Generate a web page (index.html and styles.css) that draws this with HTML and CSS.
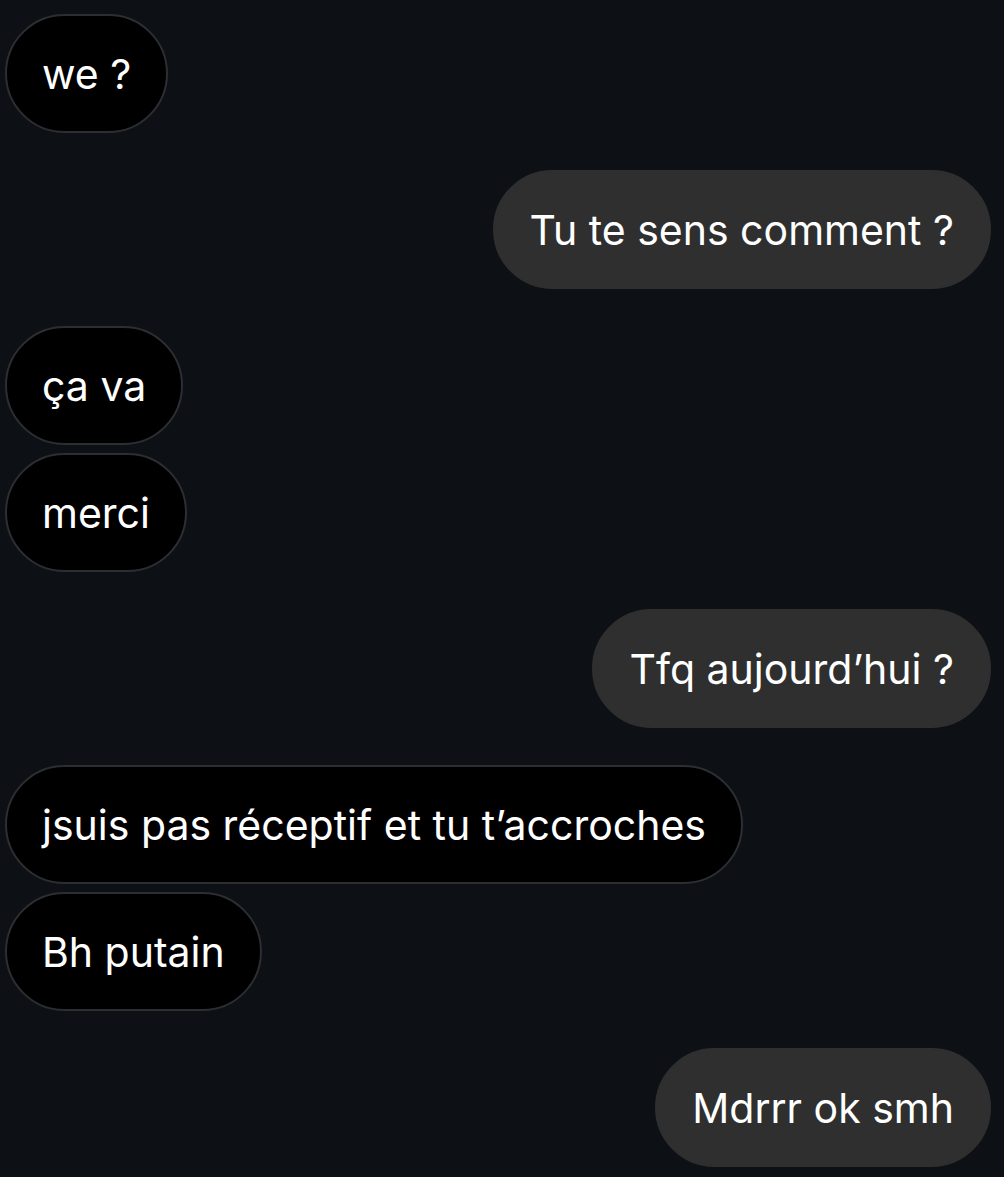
FILE: index.html
```html
<!DOCTYPE html>
<html lang="fr">
<head>
    <meta charset="UTF-8">
    <meta name="viewport" content="width=device-width, initial-scale=1.0">
    <title>Messages</title>
    <link rel="stylesheet" href="styles.css">
</head>
<body>
    <div class="thread">
        <div class="bubble received">we ?</div>
        <div class="bubble sent new-group">Tu te sens comment ?</div>
        <div class="bubble received new-group">ça va</div>
        <div class="bubble received">merci</div>
        <div class="bubble sent new-group">Tfq aujourd’hui ?</div>
        <div class="bubble received new-group">jsuis pas réceptif et tu t’accroches</div>
        <div class="bubble received">Bh putain</div>
        <div class="bubble sent new-group">Mdrrr ok smh</div>
    </div>
</body>
</html>
```

FILE: styles.css
```css
body {
    margin: 0;
    background-color: #0d1015;
    font-family: Inter, "Liberation Sans", Arial, sans-serif;
}

.thread {
    display: flex;
    flex-direction: column;
    gap: 8px;
    padding: 14px 13px 0 5px;
}

.bubble {
    box-sizing: border-box;
    height: 119px;
    padding: 0 35px;
    border: 2px solid transparent;
    border-radius: 60px;
    display: flex;
    align-items: center;
    color: white;
    font-size: 41px;
    white-space: nowrap;
}

.received {
    align-self: flex-start;
    background-color: #000;
    border-color: #2c2e32;
}

.sent {
    align-self: flex-end;
    background-color: #2f2f2f;
    border-color: #2f2f2f;
}

.new-group {
    margin-top: 29px;
}
```
